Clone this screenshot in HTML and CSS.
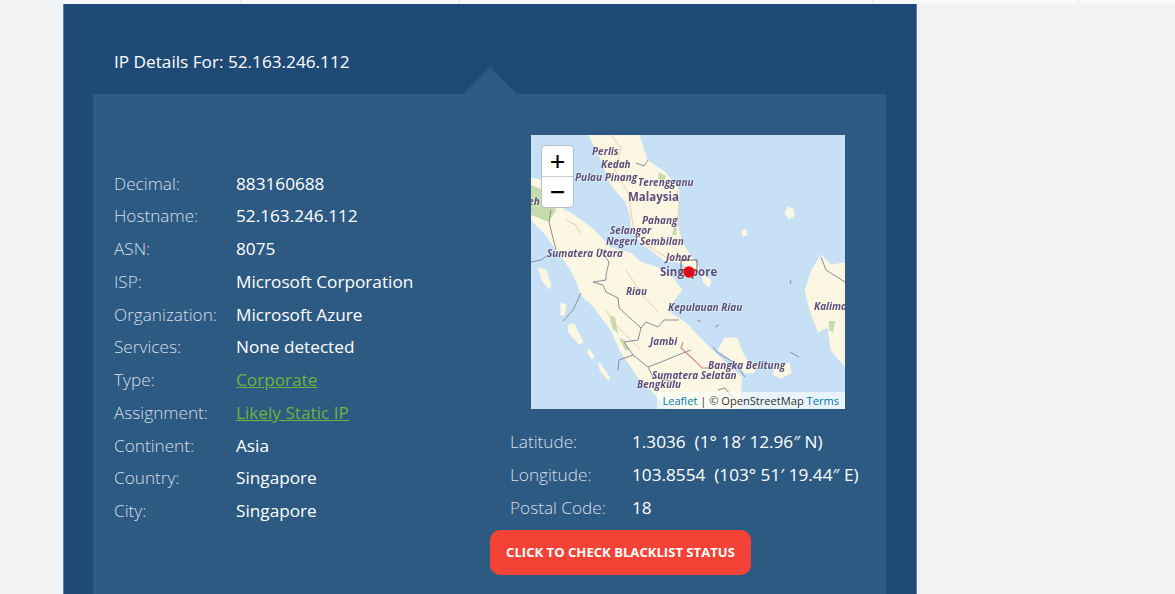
FILE: index.html
```html
<!DOCTYPE html>
<html lang="en">
  <head>
    <meta charset="UTF-8" />
    <meta name="viewport" content="width=device-width, initial-scale=1.0" />
    <title>IP Details</title>
    <link rel="stylesheet" href="styles.css">
  </head>
  <body>
    <div class="top-strip">
      <div class="strip-cell strip-a"></div>
      <div class="strip-cell strip-b"></div>
      <div class="strip-cell strip-c"></div>
      <div class="strip-cell strip-d"></div>
      <div class="strip-cell strip-e"></div>
    </div>
    <div class="panel">
      <h2 class="panel-title">IP Details For: 52.163.246.112</h2>
      <div class="panel-inner">
        <div class="col-left">
          <div class="row"><span class="label">Decimal:</span><span class="value">883160688</span></div>
          <div class="row"><span class="label">Hostname:</span><span class="value">52.163.246.112</span></div>
          <div class="row"><span class="label">ASN:</span><span class="value">8075</span></div>
          <div class="row"><span class="label">ISP:</span><span class="value">Microsoft Corporation</span></div>
          <div class="row"><span class="label">Organization:</span><span class="value">Microsoft Azure</span></div>
          <div class="row"><span class="label">Services:</span><span class="value">None detected</span></div>
          <div class="row"><span class="label">Type:</span><span class="value"><a href="#">Corporate</a></span></div>
          <div class="row"><span class="label">Assignment:</span><span class="value"><a href="#">Likely Static IP</a></span></div>
          <div class="row"><span class="label">Continent:</span><span class="value">Asia</span></div>
          <div class="row"><span class="label">Country:</span><span class="value">Singapore</span></div>
          <div class="row"><span class="label">City:</span><span class="value">Singapore</span></div>
        </div>
        <div class="col-right">
          <div class="map">
            <svg class="map-svg" viewBox="0 0 314 274" width="314" height="274">
              <!-- land -->
              <path class="land" d="M58 0 L68 20 L75 37 L80 50 L95 67 L100 83 L100 97 L113 110 L133 125 L150 128 L160 134 L168 136 L172 142 L165 128 L151 108 L146 88 L148 55 L135 38 L116 25 L108 0 Z" />
              <path class="land" d="M0 43 L10 45 L33 75 L43 80 L63 95 L80 113 L100 118 L110 127 L127 133 L141 142 L151 155 L143 165 L138 177 L155 188 L171 205 L181 215 L211 243 L208 274 L137 274 L123 258 L107 242 L90 217 L80 195 L63 172 L50 160 L47 150 L40 135 L33 125 L25 115 L15 100 L0 85 Z" />
              <path class="land" d="M7 133 L15 135 L20 150 L18 154 L12 147 Z" />
              <path class="land" d="M37 190 L43 189 L52 207 L48 209 L38 198 Z" />
              <path class="land" d="M58 214 L63 222 L61 224 L57 218 Z" />
              <path class="land" d="M68 227 L79 243 L77 245 L69 235 Z" />
              <path class="land" d="M30 168 L35 170 L33 180 L30 180 Z" />
              <path class="land" d="M187 215 L194 203 L206 203 L210 215 L216 225 L227 231 L222 238 L214 238 L201 225 Z" />
              <path class="land" d="M243 230 L258 228 L260 238 L250 243 L243 240 Z" />
              <path class="land" d="M290 120 L281 135 L274 155 L279 175 L287 197 L297 192 L300 215 L314 232 L314 128 L300 130 Z" />
              <path class="land" d="M257 72 L262 74 L263 81 L258 84 L254 78 Z" />
              <path class="land" d="M211 96 L215 94 L216 100 L212 101 Z" />
              <path class="land" d="M172 140 L180 145 L178 152 L172 147 Z" />
              <!-- green areas -->
              <path class="green" d="M0 50 L20 58 L25 75 L18 87 L0 80 Z" />
              <path class="green" d="M128 37 L135 41 L132 48 L127 44 Z" />
              <path class="green" d="M88 203 L93 205 L98 215 L94 215 Z" />
              <path class="green" d="M78 180 L84 182 L87 198 L82 195 Z" />
              <path class="green" d="M298 186 L304 186 L302 198 L298 195 Z" />
              <path class="green" d="M144 88 L146 100 L141 100 Z" />
              <!-- roads -->
              <g class="road">
                <path d="M80 0 L90 13 L84 35 L97 57 L100 77 L103 97 L120 113 L140 125" />
                <path d="M146 55 L148 72 L145 97" />
                <path d="M95 135 L113 162 L127 177" />
                <path d="M35 85 L45 90 L50 100" />
                <path d="M75 175 L85 190 L110 215" />
              </g>
              <path class="road-red" d="M152 207 L150 213 L161 223 L171 233 L177 233" />
              <!-- borders -->
              <g class="border">
                <path d="M20 75 L18 87 L22 103 L25 115" />
                <path d="M0 127 L10 125 L17 120" />
                <path d="M68 113 L78 127 L75 140 L75 145 L62 147 L72 150 L75 157 L87 163 L88 173 L110 193 L107 205 L93 207 L102 220 L117 232 L130 227 L147 220 L160 215" />
                <path d="M50 158 L42 175 L32 186" />
                <path d="M110 193 L115 187 L127 192 L133 185 L148 185" />
                <path d="M102 220 L88 225 L87 235" />
                <path d="M117 232 L122 242 L147 248" />
                <path d="M182 212 L187 218 L204 228 L214 242" />
                <path d="M290 122 L295 135 L314 147" />
                <path d="M187 255 L194 253 L204 265" />
                <path d="M117 25 L113 31 L105 28" />
                <path d="M259 217 L268 222" />
                <path d="M260 145 L259 149" />
                <path d="M166 185 L170 187" />
                <path d="M184 192 L188 190" />
              </g>
              <!-- place names -->
              <g class="place">
                <text x="61" y="20">Perlis</text>
                <text x="70" y="33">Kedah</text>
                <text x="44" y="46">Pulau Pinang</text>
                <text x="107" y="51">Terengganu</text>
                <text x="111" y="89">Pahang</text>
                <text x="79" y="99">Selangor</text>
                <text x="75" y="110">Negeri Sembilan</text>
                <text x="16" y="122">Sumatera Utara</text>
                <text x="135" y="126">Johor</text>
                <text x="95" y="160">Riau</text>
                <text x="137" y="176">Kepulauan Riau</text>
                <text x="119" y="210">Jambi</text>
                <text x="177" y="234">Bangka Belitung</text>
                <text x="121" y="244">Sumatera Selatan</text>
                <text x="106" y="253">Bengkulu</text>
                <text x="283" y="175">Kalimantan</text>
                <text x="-14" y="70">Aceh</text>
              </g>
              <g class="place-big">
                <text x="97" y="66">Malaysia</text>
                <text x="129" y="141">Singapore</text>
              </g>
              <!-- marker -->
              <path class="tile-box" d="M150 141 V125 H166 V137" />
              <circle class="pin" cx="158" cy="137" r="4.5" />
            </svg>
            <div class="zoom-box">
              <a class="zoom-btn" href="#">+</a>
              <a class="zoom-btn" href="#">&minus;</a>
            </div>
            <div class="attribution"><a href="#">Leaflet</a> | &copy; OpenStreetMap <a href="#">Terms</a></div>
          </div>
          <div class="geo">
            <div class="row"><span class="label">Latitude:</span><span class="value">1.3036&nbsp; (1&deg; 18&prime; 12.96&Prime; N)</span></div>
            <div class="row"><span class="label">Longitude:</span><span class="value">103.8554&nbsp; (103&deg; 51&prime; 19.44&Prime; E)</span></div>
            <div class="row"><span class="label">Postal Code:</span><span class="value">18</span></div>
          </div>
          <a class="btn-check" href="#">Click to check blacklist status</a>
        </div>
      </div>
    </div>
  </body>
</html>
```

FILE: styles.css
```css
html, body {
  height: 100%;
  overflow: hidden;
}
body {
  margin: 0;
  background-color: #f2f3f5;
  font-family: "Open Sans", "Liberation Sans", sans-serif;
  font-size: 17.2px;
  color: #fff;
}
.top-strip {
  display: flex;
  height: 4px;
  margin-left: 63px;
  background-color: #f9fafb;
}
.strip-cell {
  border-right: 2px solid #eceef0;
}
.strip-a { width: 177px; }
.strip-b { width: 216px; }
.strip-c { width: 412px; }
.strip-d { width: 203px; }
.strip-e { flex: 1; border-right: 0; }

.panel {
  width: 852px;
  margin-left: 63px;
  padding-bottom: 60px;
  background-color: #1f4a75;
  border-left: 1px solid #5b7fa6;
  border-right: 1px solid #5b7fa6;
}
.panel-title {
  margin: 0;
  padding: 46px 0 0 50px;
  height: 44px;
  font-size: 17.2px;
  line-height: 24px;
  font-weight: 400;
}
.panel-inner {
  position: relative;
  display: flex;
  margin: 0 30px 0 29px;
  height: 540px;
  background-color: #2d5a82;
}
.panel-inner::before {
  content: "";
  position: absolute;
  left: 370px;
  top: -27px;
  border-left: 27px solid transparent;
  border-right: 27px solid transparent;
  border-bottom: 27px solid #2d5a82;
}
.col-left {
  width: 376px;
  padding: 73.7px 0 0 21px;
}
.row {
  display: flex;
  height: 32.75px;
  line-height: 32.75px;
  white-space: nowrap;
}
.label {
  width: 122px;
  flex: none;
  font-weight: 300;
  color: #d5dfe8;
}
.value {
  font-weight: 400;
}
.value a {
  color: #6cb33f;
}

.col-right {
  padding-top: 41px;
}
.map {
  position: relative;
  width: 314px;
  height: 274px;
  margin-left: 41px;
  overflow: hidden;
  background-color: #c7e0f5;
}
.map-svg {
  display: block;
  filter: blur(0.45px);
}
.land {
  fill: #fbf7e2;
  stroke: #fbf7e2;
  stroke-width: 1;
  stroke-linejoin: round;
}
.green { fill: #c5dcae; }
.road {
  fill: none;
  stroke: #f6c9a8;
  stroke-width: 1;
}
.road-red {
  fill: none;
  stroke: #e28a85;
  stroke-width: 1.2;
}
.border {
  fill: none;
  stroke: #8d8d99;
  stroke-width: 1;
  stroke-linejoin: round;
}
.place text, .place-big text {
  fill: #5d4f78;
  stroke: rgba(255, 255, 255, 0.45);
  stroke-width: 1.2px;
  paint-order: stroke;
  font-weight: 700;
}
.place text {
  font-size: 10px;
  font-style: italic;
}
.place-big text {
  font-size: 11.5px;
}
.tile-box {
  fill: none;
  stroke: #333;
  stroke-width: 0.7;
}
.pin {
  fill: #c8102e;
  stroke: #ff0000;
  stroke-width: 2.5;
}
.zoom-box {
  position: absolute;
  left: 10px;
  top: 10px;
  border: 1px solid #b5bfc9;
  border-radius: 4px;
  background-color: #fff;
}
.zoom-btn {
  display: block;
  width: 31px;
  height: 30px;
  line-height: 30px;
  text-align: center;
  font-family: "DejaVu Sans Mono", monospace;
  font-weight: 400;
  font-size: 25px;
  color: #000;
  text-decoration: none;
}
.zoom-btn:first-child {
  border-bottom: 1px solid #ccc;
}
.attribution {
  position: absolute;
  right: 0;
  bottom: 0;
  padding: 0 6px 0 5px;
  height: 17px;
  line-height: 18px;
  font-size: 11.1px;
  color: #333;
  background-color: rgba(255, 255, 255, 0.6);
  white-space: nowrap;
}
.attribution a {
  color: #0078a8;
  text-decoration: none;
}
.geo {
  margin: 17px 0 0 20px;
}
.btn-check {
  display: block;
  width: 261px;
  height: 45px;
  margin-top: 6px;
  line-height: 45px;
  text-align: center;
  border-radius: 10px;
  background-color: #f44336;
  color: #fff;
  font-size: 13.1px;
  font-weight: 700;
  text-transform: uppercase;
  text-decoration: none;
}
```
